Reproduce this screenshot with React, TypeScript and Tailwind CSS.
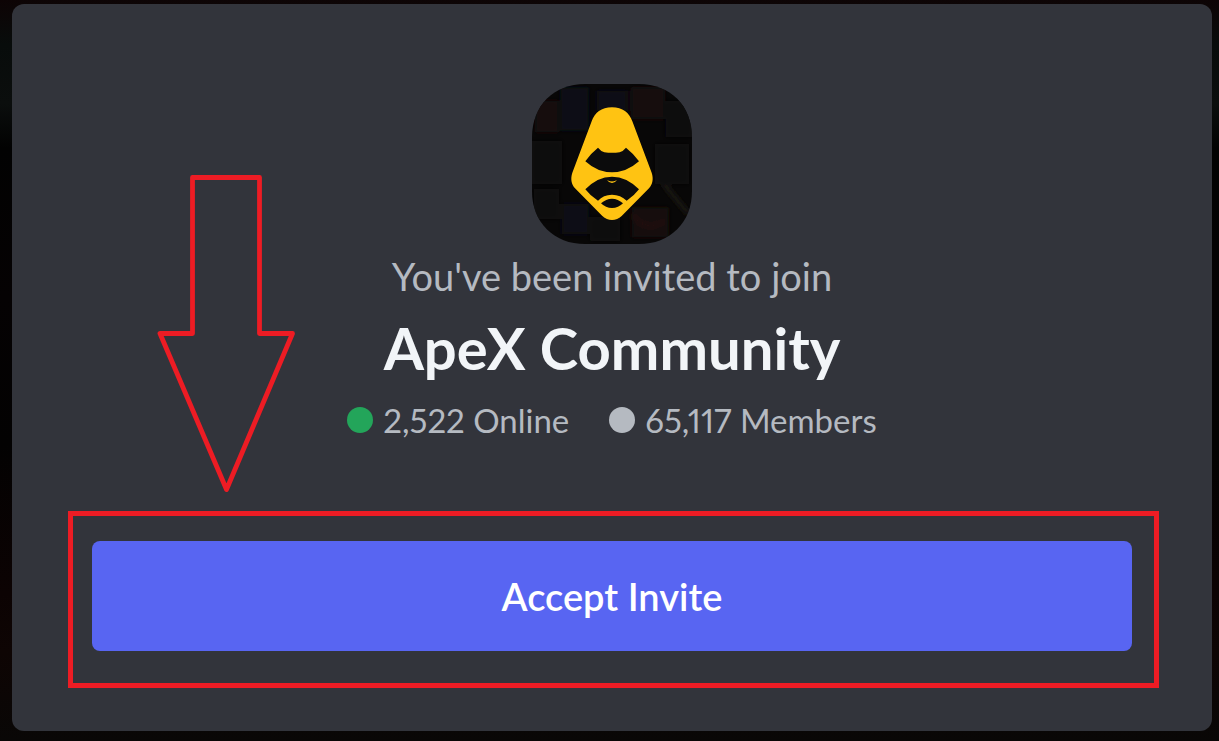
import type { ReactNode } from 'react';

interface StatProps {
  dotClass: string;
  children: ReactNode;
}

const Stat = ({ dotClass, children }: StatProps) => (
  <div className="flex items-center gap-[10px]">
    <span className={`h-[26px] w-[26px] rounded-full ${dotClass}`} />
    <span>{children}</span>
  </div>
);

const ServerIcon = () => (
  <svg viewBox="30 30 480 480" className="h-40 w-40" role="img" aria-label="ApeX Community">
    <defs>
      <clipPath id="squircle">
        <path d="M190 30 H350 C445 30 510 95 510 190 V350 C510 445 445 510 350 510 H190 C95 510 30 445 30 350 V190 C30 95 95 30 190 30 Z" />
      </clipPath>
      <filter id="soften">
        <feGaussianBlur stdDeviation="8" />
      </filter>
    </defs>
    <g clipPath="url(#squircle)">
      <rect x="30" y="30" width="480" height="480" fill="#080707" />
      <g filter="url(#soften)">
        <rect x="40" y="80" width="70" height="95" fill="#150c0c" />
        <rect x="115" y="40" width="85" height="130" fill="#080c12" />
        <rect x="225" y="50" width="90" height="60" fill="#091016" />
        <rect x="328" y="40" width="100" height="95" fill="#150f0c" />
        <rect x="430" y="80" width="80" height="110" fill="#0a0911" />
        <rect x="30" y="200" width="90" height="130" fill="#0d0909" />
        <rect x="35" y="345" width="75" height="90" fill="#0e100e" />
        <rect x="120" y="390" width="80" height="90" fill="#070d12" />
        <rect x="205" y="430" width="90" height="70" fill="#0c110b" />
        <rect x="400" y="210" width="100" height="120" fill="#100c0b" />
        <rect x="330" y="400" width="110" height="90" fill="#150b09" />
        <path d="M425 330 L500 420" stroke="#1e1a18" strokeWidth="12" />
        <path d="M330 420 Q370 480 430 440" stroke="#26120e" strokeWidth="10" fill="none" />
      </g>
      {/* Hooded ape */}
      <path
        d="M270 100 C302 100 322 116 331 142 L389 296 C395 315 392 330 381 343 L299 426 C282 442 258 442 241 426 L159 343 C148 330 145 315 151 296 L209 142 C218 116 238 100 270 100 Z"
        fill="#ffc312"
      />
      <g fill="#0b0b0c">
        <path d="M190 262 Q206 238 228 221 Q237 232 247 235 Q270 238 293 235 Q303 232 312 221 Q334 238 351 262 Q314 295 270 295 Q226 295 190 262 Z" />
        <path d="M190 346 Q226 308 270 308 Q314 308 351 346 Q336 366 314 380 Q296 362 270 362 Q244 362 228 380 Q205 366 190 346 Z" />
        <path d="M237 388 Q252 374 270 374 Q288 374 303 388 Q289 402 270 402 Q251 402 237 388 Z" />
      </g>
      <path d="M255 318 Q263 323 270 322 Q277 323 285 318 Q279 327 270 327 Q261 327 255 318 Z" fill="#ffc312" />
    </g>
  </svg>
);

const Arrow = () => (
  <svg
    viewBox="0 0 140 320"
    className="pointer-events-none absolute left-36 top-[170px] h-80 w-[140px]"
    fill="none"
    stroke="#ed1c24"
    strokeWidth="4.8"
    strokeLinejoin="round"
    aria-hidden="true"
  >
    <path d="M36.5 3.5 H103.5 V159.5 H136.5 L70.5 315.5 L4 159.5 H36.5 Z" />
  </svg>
);

export default function App() {
  return (
    <div className="min-h-screen bg-[#040304] bg-[linear-gradient(180deg,#0d0405_0%,#080c0b_6%,#0b0e0d_14%,#020202_20%,#050203_40%,#030202_60%,#0c0303_80%,#0e0504_88%,#090706_100%)] pb-[10px] pl-3 pr-[7px] pt-1 font-[Lato,sans-serif]">
      <main className="relative flex flex-col items-center rounded-xl bg-[#32343b] p-20">
        <ServerIcon />
        <p className="mt-2 text-[38px] leading-[48px] text-[#b5bac1]">You've been invited to join</p>
        <h1 className="mt-3 text-[58px] font-bold leading-[72px] text-[#f2f5f8]">ApeX Community</h1>
        <div className="mt-3 flex gap-10 text-[33px] leading-[48px] text-[#b5bac1] proportional-nums">
          <Stat dotClass="bg-[#23a55a]">2,522 Online</Stat>
          <Stat dotClass="bg-[#b5bac1]">65,117 Members</Stat>
        </div>

        <div className="relative mt-[97px] w-full">
          <button
            type="button"
            className="h-[110px] w-full cursor-pointer rounded-lg bg-[#5865f2] text-[38px] font-semibold text-white"
          >
            Accept Invite
          </button>
          <div className="pointer-events-none absolute -bottom-[37px] -left-6 -right-[27px] -top-[30px] border-5 border-[#ed1c24]" />
        </div>

        <Arrow />
      </main>
    </div>
  );
}
